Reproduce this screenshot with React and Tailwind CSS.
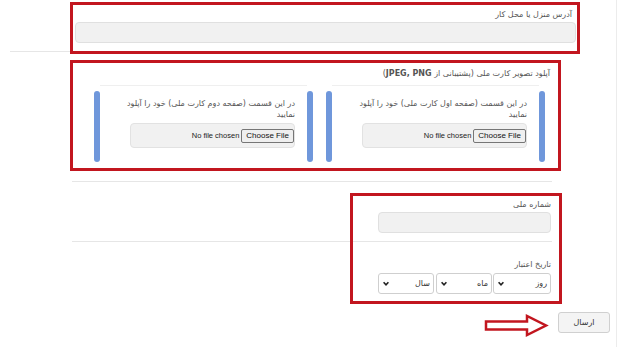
import React from "react";

const fa = { fontFamily: '"DejaVu Sans", "Noto Sans", sans-serif' };

function FileBox() {
  return (
    <div className="ml-auto flex h-[25px] w-[165px] items-center justify-end rounded-[4px] border border-[#e2e2e2] bg-[#f1f1f1]">
      <span className="mr-[2px] text-[7.5px] leading-none text-[#222]" style={{ fontFamily: '"Liberation Sans", Arial, sans-serif' }}>
        No file chosen
      </span>
      <span
        className="flex h-[14px] items-center rounded-[2px] border border-[#767676] bg-[#efefef] px-[4px] text-[8px] leading-none text-[#111]"
        style={{ fontFamily: '"Liberation Sans", Arial, sans-serif' }}
      >
        Choose File
      </span>
    </div>
  );
}

function Card({ which }) {
  return (
    <div className="flex h-[77px] w-[219px]">
      <div className="mt-[6px] w-[6px] rounded-full bg-[#6f97db]" />
      <div className="flex flex-1 flex-col border-t border-[#efefef] pr-[12px] pt-[12px]">
        <p dir="rtl" className="text-right text-[8px] leading-[11px] text-[#555] whitespace-nowrap" style={fa}>
          در این قسمت (صفحه {which} کارت ملی) خود را آپلود
          <br />
          نمایید
        </p>
        <div className="mt-[3px]">
          <FileBox />
        </div>
      </div>
      <div className="mt-[6px] w-[6px] rounded-full bg-[#6f97db]" />
    </div>
  );
}

function Select({ label, w }) {
  return (
    <div className={`flex h-[21px] items-center justify-between rounded-[3px] border border-[#cfcfcf] bg-white pl-[4px] pr-[3px] ${w}`}>
      <svg width="6" height="5" viewBox="0 0 6 5">
        <path d="M0.6 1.2 L3 3.8 L5.4 1.2" stroke="#222" strokeWidth="1.6" fill="none" />
      </svg>
      <span dir="rtl" className="text-[8px] leading-none text-[#333]" style={fa}>
        {label}
      </span>
    </div>
  );
}

export default function App() {
  return (
    <div className="relative h-[347px] w-[624px] overflow-hidden bg-white">
      <div className="flex h-full">
        <div className="h-full w-[617px] border-r border-[#ececec]">
          {/* Section 1 */}
          <div className="ml-[75px] w-[501px] pt-[10px] pb-[8px]">
            <p dir="rtl" className="pr-[4px] text-right text-[8px] leading-[10px] text-[#555]" style={fa}>
              آدرس منزل یا محل کار
            </p>
            <div className="mt-[2px] h-[21px] rounded-[4px] border border-[#e0e0e0] bg-[#f1f1f1]" />
          </div>
          <div className="ml-[10px] h-px w-[570px] bg-[#e6e6e6]" />

          {/* Section 2 */}
          <div className="ml-[94px] w-[458px] pt-[17px] pb-[19px]">
            <p dir="rtl" className="pr-[2px] text-right text-[8px] leading-[10px] text-[#555]" style={fa}>
              آپلود تصویر کارت ملی (پشتیبانی از <b className="font-bold">JPEG, PNG</b>)
            </p>
            <div className="mt-[6px] flex gap-[13px]">
              <Card which="دوم" />
              <Card which="اول" />
            </div>
          </div>
          <div className="ml-[72px] h-px w-[480px] bg-[#e6e6e6]" />

          {/* Section 3 */}
          <div className="ml-[378px] w-[173px] pt-[18px] pb-[8px]">
            <p dir="rtl" className="text-right text-[8px] leading-[10px] text-[#555]" style={fa}>
              شماره ملی
            </p>
            <div className="mt-[2px] h-[21px] rounded-[4px] border border-[#e0e0e0] bg-[#f1f1f1]" />
          </div>
          <div className="ml-[72px] h-px w-[480px] bg-[#e6e6e6]" />

          {/* Section 4 */}
          <div className="ml-[378px] w-[173px] pt-[18px]">
            <p dir="rtl" className="text-right text-[8px] leading-[10px] text-[#555]" style={fa}>
              تاریخ اعتبار
            </p>
            <div className="mt-[3px] flex">
              <Select label="سال" w="w-[56px]" />
              <div className="w-[2px]" />
              <Select label="ماه" w="w-[56px]" />
              <div className="w-[1px]" />
              <Select label="روز" w="w-[58px]" />
            </div>
          </div>

          {/* Submit */}
          <div className="ml-[558px] mt-[18px] flex h-[21px] w-[52px] items-center justify-center rounded-[3px] border border-[#d0d0d0] bg-[#f4f4f4]">
            <span dir="rtl" className="text-[8px] leading-none text-[#333]" style={fa}>
              ارسال
            </span>
          </div>
        </div>
      </div>

      {/* Annotations (overlay) */}
      <div className="pointer-events-none absolute left-[70px] top-[2px] h-[52px] w-[510px] border-[3px] border-[#c2161f]" />
      <div className="pointer-events-none absolute left-[70px] top-[60px] h-[111px] w-[491px] border-[3px] border-[#c2161f]" />
      <div className="pointer-events-none absolute left-[350px] top-[193px] h-[111px] w-[212px] border-[3px] border-[#c2161f]" />
      <svg className="pointer-events-none absolute left-[484px] top-[314px]" width="65" height="23" viewBox="0 0 65 23">
        <polygon
          points="2,7.5 43,7.5 43,2 62,11.5 43,21 43,15.5 2,15.5"
          fill="white"
          stroke="#c2161f"
          strokeWidth="2.5"
          strokeLinejoin="miter"
        />
      </svg>
    </div>
  );
}
